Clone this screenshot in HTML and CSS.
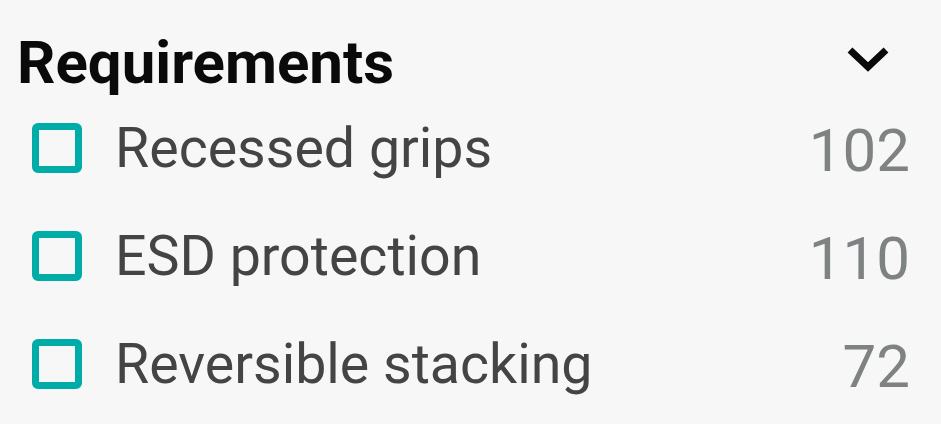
FILE: index.html
```html
<!DOCTYPE html>
<html lang="en">
<head>
    <meta charset="UTF-8">
    <title>Filters</title>
    <meta name="viewport" content="width=device-width, initial-scale=1.0">
    <link rel="stylesheet" href="styles.css">
</head>
<body>
    <div class="filter-group">
        <div class="filter-head">
            <div class="filter-title">Requirements</div>
            <svg class="chevron" width="42" height="26" viewBox="0 0 42 26">
                <path d="M3 4 L21 21 L39 4" fill="none" stroke="#0a0a0a" stroke-width="7"/>
            </svg>
        </div>
        <ul class="filter-list">
            <li class="filter-item">
                <span class="check"></span>
                <span class="label">Recessed grips</span>
                <span class="count">102</span>
            </li>
            <li class="filter-item">
                <span class="check"></span>
                <span class="label">ESD protection</span>
                <span class="count">110</span>
            </li>
            <li class="filter-item">
                <span class="check"></span>
                <span class="label">Reversible stacking</span>
                <span class="count">72</span>
            </li>
        </ul>
    </div>
</body>
</html>
```

FILE: styles.css
```css
body {
    margin: 0;
    background: #f7f7f7;
    font-family: Roboto, 'Liberation Sans', Arial, sans-serif;
}
.filter-group {
    padding: 26px 31px 0 17px;
}
.filter-head {
    display: flex;
    align-items: center;
    justify-content: space-between;
    height: 72px;
}
.filter-title {
    font-size: 60px;
    font-weight: 700;
    color: #0a0a0a;
}
.chevron {
    margin-right: 21px;
    margin-top: -6px;
}
.filter-list {
    list-style: none;
    margin: 0;
    padding: 0 0 0 15px;
}
.filter-item {
    display: flex;
    align-items: center;
    height: 108px;
}
.filter-item:first-child {
    margin-top: -4px;
}
.check {
    width: 50px;
    height: 50px;
    box-sizing: border-box;
    border: 7px solid #00aca8;
    border-radius: 6px;
    flex-shrink: 0;
}
.label {
    flex: 1;
    margin-left: 33px;
    font-size: 55.5px;
    color: #444;
}
.count {
    margin-top: 5px;
    font-size: 60px;
    color: #7e8282;
}
```
